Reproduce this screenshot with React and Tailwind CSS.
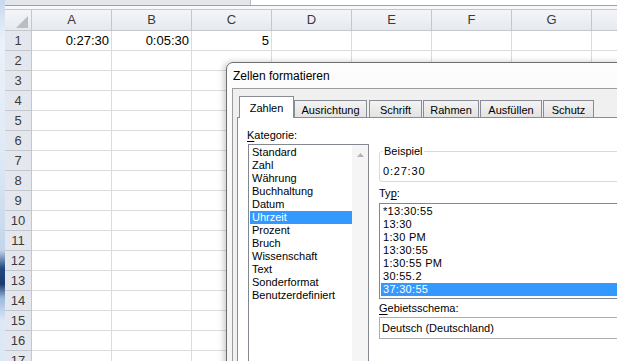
import React from "react";

const columns = ["A", "B", "C", "D", "E", "F", "G", "H"];
const rows = Array.from({ length: 17 }, (_, i) => i + 1);
const firstRow = { A: "0:27:30", B: "0:05:30", C: "5" };

const categories = [
  "Standard",
  "Zahl",
  "Währung",
  "Buchhaltung",
  "Datum",
  "Uhrzeit",
  "Prozent",
  "Bruch",
  "Wissenschaft",
  "Text",
  "Sonderformat",
  "Benutzerdefiniert",
];

const types = ["*13:30:55", "13:30", "1:30 PM", "13:30:55", "1:30:55 PM", "30:55.2", "37:30:55"];

const tabs = [
  { label: "Ausrichtung", className: "w-[73px]" },
  { label: "Schrift", className: "ml-[2px] w-[53px]" },
  { label: "Rahmen", className: "ml-[1px] w-[56px]" },
  { label: "Ausfüllen", className: "ml-[1px] w-[62px]" },
  { label: "Schutz", className: "ml-[1px] w-[51px]" },
];

function Sheet() {
  return (
    <div className="flex h-full">
      <div className="w-[5px] shrink-0 bg-[linear-gradient(to_bottom,#c7d9ee_0px,#eaf2fa_40px,#dfeaf6_150px,#c3d6ec_250px,#24497f_268px,#1a3b6d_284px,#9bb8dc_298px,#dce8f5_320px)]" />
      <div className="min-w-0 flex-1">
        <div className="flex h-[5px]">
          <div className="w-[245px] bg-[#e3e7ec]" />
          <div className="flex-1 border-l border-[#b6bcc4] bg-white" />
        </div>
        <div className="h-[4px] border-t border-[#9aa3ad] bg-[#f7f8fa]" />
        <div className="flex h-[22px] border-y border-[#c3c8cf] bg-[linear-gradient(to_bottom,#f3f5f8,#e6eaef)] text-[13px] text-[#3b3b3b]">
          <div className="flex w-[27px] shrink-0 items-end justify-end border-r border-[#c3c8cf] pb-[2px] pr-[3px]">
            <svg width="12" height="12" viewBox="0 0 12 12">
              <polygon points="12,0 12,12 0,12" fill="#b9bec5" />
            </svg>
          </div>
          {columns.map((c) => (
            <div
              key={c}
              className="w-[80px] shrink-0 border-r border-[#c3c8cf] text-center leading-[20px]"
            >
              {c === "H" ? "" : c}
            </div>
          ))}
        </div>
        {rows.map((r) => (
          <div key={r} className="flex h-[20px] text-[13px]">
            <div className="w-[27px] shrink-0 border-b border-r border-[#c3c8cf] bg-[#e4e8ee] text-center leading-[19px] text-[#3b3b3b]">
              {r}
            </div>
            {columns.map((c) => (
              <div
                key={c}
                className="w-[80px] shrink-0 border-b border-r border-[#dadcdf] pr-[2px] text-right leading-[19px] text-black"
              >
                {r === 1 ? firstRow[c] : ""}
              </div>
            ))}
          </div>
        ))}
      </div>
    </div>
  );
}

function ListItem({ children, selected }) {
  return (
    <div
      className={`h-[13px] whitespace-nowrap pl-[1px] text-[11px] leading-[13px] ${
        selected ? "bg-[#3399ff] text-white" : "text-black"
      }`}
    >
      {children}
    </div>
  );
}

function Dialog() {
  return (
    <div className="absolute left-[226px] top-[62px] flex h-[320px] w-[420px] flex-col rounded-tl-[7px] border border-[#6e6e6e] bg-[linear-gradient(to_bottom,#fdfdfd,#f3f3f3)] pl-[5px] shadow-[-2px_0_6px_rgba(0,0,0,0.22)]">
      <div className="flex h-[25px] items-center pl-[1px] text-[12px] text-black">
        Zellen formatieren
      </div>
      <div className="flex-1 border-l border-t border-[#9c9c9c] bg-[#f0f0f0] pl-[4px] pt-[7px]">
        <div className="relative z-10 -mb-px flex h-[22px] items-end pl-[2px] text-[11px] text-black">
          <div className="h-[22px] w-[55px] border border-b-0 border-[#898c95] bg-white pt-[2px] text-center leading-[19px]">
            Zahlen
          </div>
          {tabs.map((t) => (
            <div
              key={t.label}
              className={`h-[18px] border border-[#898c95] bg-[linear-gradient(to_bottom,#f3f3f3,#e3e3e3)] text-center leading-[18px] ${t.className}`}
            >
              {t.label}
            </div>
          ))}
        </div>
        <div className="flex h-[260px] border border-[#898c95] bg-white pl-[10px] pt-[10px] text-[11px] text-black">
          <div className="flex w-[121px] shrink-0 flex-col">
            <div className="-ml-px leading-[15px]">
              <span className="underline underline-offset-[2px]">K</span>ategorie:
            </div>
            <div className="mt-px flex h-[230px] border border-[#828790] bg-white">
              <div className="flex-1 pl-px pt-px">
                {categories.map((c) => (
                  <ListItem key={c} selected={c === "Uhrzeit"}>
                    <span className="pl-[1px]">{c}</span>
                  </ListItem>
                ))}
              </div>
              <div className="flex w-[16px] justify-center bg-[#f5f5f5] pt-[8px]">
                <svg width="7" height="4" viewBox="0 0 7 4">
                  <polygon points="3.5,0 7,4 0,4" fill="#b4b4b4" />
                </svg>
              </div>
            </div>
          </div>
          <div className="ml-[10px] flex min-w-0 flex-1 flex-col">
            <fieldset className="mt-[16px] rounded-[3px] border border-[#d5dbe0] px-[3px] pb-[3px]">
              <legend className="px-[1px] leading-[15px]">Beispiel</legend>
              <div className="mt-[6px] leading-[13px] tracking-[0.8px]">0:27:30</div>
            </fieldset>
            <div className="mt-[4px] leading-[15px]">
              Ty<span className="underline underline-offset-[2px]">p</span>:
            </div>
            <div className="mt-[2px] h-[96px] border border-[#828790] bg-white pl-px pt-px">
              {types.map((t, i) => (
                <ListItem key={i} selected={i === types.length - 1}>
                  <span className="pl-[1px] tracking-[0.3px]">{t}</span>
                </ListItem>
              ))}
            </div>
            <div className="mt-[2px] leading-[15px]">
              <span className="underline underline-offset-[2px]">G</span>ebietsschema:
            </div>
            <div className="mt-px flex h-[22px] items-center border border-[#abadb3] bg-white pl-[2px]">
              Deutsch (Deutschland)
            </div>
          </div>
        </div>
      </div>
    </div>
  );
}

export default function App() {
  return (
    <div className="relative h-[361px] w-[617px] overflow-hidden bg-white font-['Liberation_Sans',Arial,sans-serif]">
      <Sheet />
      <Dialog />
    </div>
  );
}
